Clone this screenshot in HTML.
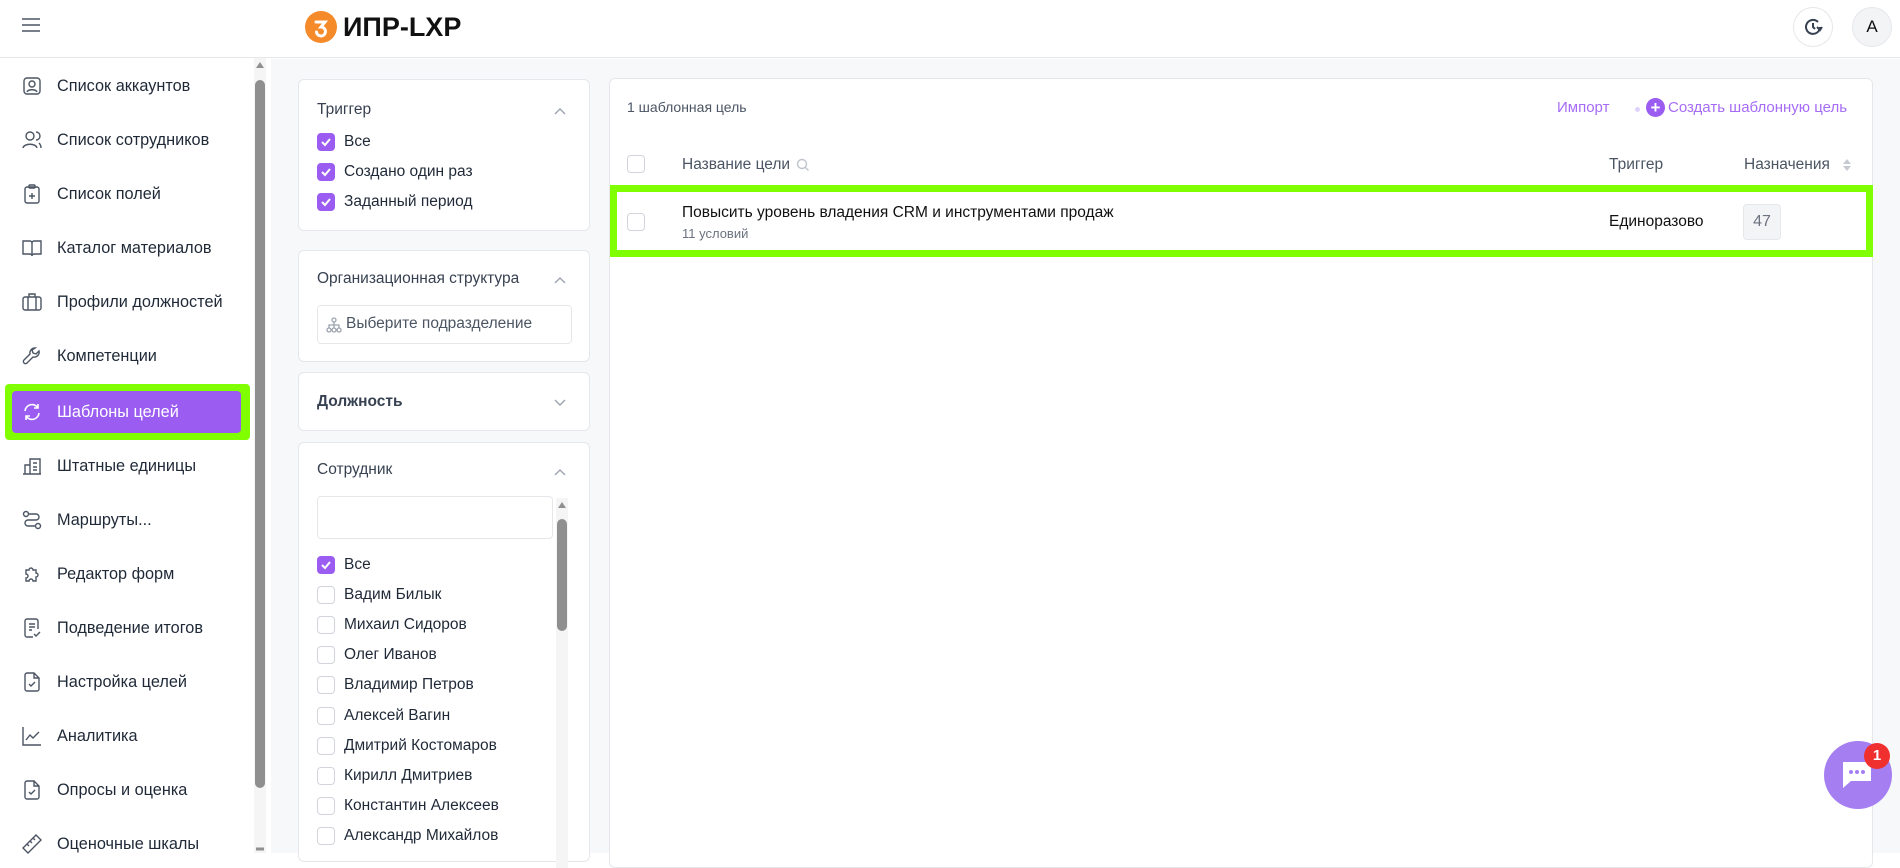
<!DOCTYPE html>
<html><head><meta charset="utf-8"><style>
*{box-sizing:border-box;margin:0;padding:0}
body{width:1900px;height:853px;overflow:hidden;background:#fff;font-family:"Liberation Sans",Arial,sans-serif;color:#1f2937;position:relative}
.abs{position:absolute}
.top{left:0;top:0;width:1900px;height:58px;border-bottom:1px solid #e5e7eb;background:#fff}
.item{position:absolute;left:0;height:40px;width:250px;display:flex;align-items:center;font-size:16.3px;color:#1f2937}
.item svg{position:absolute;left:22px;width:20px;height:20px}
.item span{position:absolute;left:57px}
.content{left:271px;top:59px;width:1629px;height:794px;background:#f7f8fa}
.card{position:absolute;background:#fff;border:1px solid #e5e7eb;border-radius:6px}
.ttl{position:absolute;left:18px;font-size:15.5px;color:#374151}
.chev{position:absolute;right:22px;width:14px;height:14px}
.cb{position:absolute;width:18px;height:18px;border-radius:4px;border:1px solid #d1d5db;background:#fff}
.cb.on{background:#9b5cf2;border-color:#9b5cf2}
.lbl{position:absolute;font-size:15.5px;color:#1f2937}
</style></head><body>
<div class="abs top"></div>
<svg class="abs" style="left:21px;top:17px" width="20" height="16" viewBox="0 0 20 16"><path d="M1 2h18M1 8h18M1 14h18" stroke="#4b5563" stroke-width="1.6"/></svg>
<svg class="abs" style="left:305px;top:11px" width="32" height="32" viewBox="0 0 32 32"><circle cx="16" cy="16" r="16" fill="#f58a2a"/><path d="M11 11h9l-4 5a4.5 4.5 0 1 1-4.5 5" stroke="#fff" stroke-width="3" fill="none" stroke-linecap="round"/></svg>
<div class="abs" style="left:343px;top:12px;font-size:27px;font-weight:bold;color:#111">ИПР-LXP</div>
<div class="abs" style="left:1793px;top:7px;width:40px;height:40px;border:1px solid #e5e7eb;border-radius:50%"></div>
<svg class="abs" style="left:1803px;top:17px" width="20" height="20" viewBox="0 0 20 20"><path d="M17 10a7 7 0 1 1-2-5" stroke="#374151" stroke-width="2" fill="none"/><path d="M10 6v4l2 2" stroke="#374151" stroke-width="2" fill="none"/><path d="M14 10l3 3 2-3" stroke="#374151" stroke-width="2" fill="none"/></svg>
<div class="abs" style="left:1852px;top:7px;width:40px;height:40px;border:1px solid #e5e7eb;border-radius:50%;background:#f3f4f6;text-align:center;line-height:38px;font-size:17px;color:#111">A</div>

<div class="abs" style="left:0;top:58px;width:254px;height:795px">
<div class="item" style="top:8px"><svg viewBox="0 0 20 20" fill="none" stroke="#4b5563" stroke-width="1.4"><rect x="2" y="2" width="16" height="16" rx="3"/><circle cx="10" cy="8" r="3"/><path d="M5 16c1-3 9-3 10 0"/></svg><span>Список аккаунтов</span></div>
<div class="item" style="top:62px"><svg viewBox="0 0 20 20" fill="none" stroke="#4b5563" stroke-width="1.4"><circle cx="8" cy="6" r="4"/><path d="M1 18c1-5 13-5 14 0M14 2a4 4 0 0 1 0 8M17 13c1 1 2 3 2 5"/></svg><span>Список сотрудников</span></div>
<div class="item" style="top:116px"><svg viewBox="0 0 20 20" fill="none" stroke="#4b5563" stroke-width="1.4"><rect x="3" y="3" width="14" height="16" rx="2"/><rect x="7" y="1" width="6" height="3" rx="1"/><path d="M10 9v6M7 12h6"/></svg><span>Список полей</span></div>
<div class="item" style="top:170px"><svg viewBox="0 0 20 20" fill="none" stroke="#4b5563" stroke-width="1.4"><path d="M1 3h7a2 2 0 0 1 2 2v13a2 2 0 0 0-2-2H1zM19 3h-7a2 2 0 0 0-2 2v13a2 2 0 0 1 2-2h7z"/></svg><span>Каталог материалов</span></div>
<div class="item" style="top:224px"><svg viewBox="0 0 20 20" fill="none" stroke="#4b5563" stroke-width="1.4"><rect x="1" y="5" width="18" height="13" rx="2"/><path d="M7 5V2h6v3M6 5v13M14 5v13"/></svg><span>Профили должностей</span></div>
<div class="item" style="top:278px"><svg viewBox="0 0 20 20" fill="none" stroke="#4b5563" stroke-width="1.4"><path d="M13 2a5 5 0 0 0-5 6L2 14a2 2 0 0 0 3 3l6-6a5 5 0 0 0 6-6l-3 3-3-1-1-3z"/></svg><span>Компетенции</span></div>
<div class="abs" style="left:5px;top:326px;width:245px;height:56px;background:#7fff00;border-radius:4px"></div>
<div class="abs" style="left:12px;top:333px;width:229px;height:42px;background:#9b5cf2;border-radius:4px"></div>
<div class="item" style="top:334px;color:#fff"><svg viewBox="0 0 20 20" fill="none" stroke="#fff" stroke-width="1.6"><path d="M3 9a7 7 0 0 1 13-3M17 11a7 7 0 0 1-13 3M16 2v4h-4M4 18v-4h4"/></svg><span>Шаблоны целей</span></div>
<div class="item" style="top:388px"><svg viewBox="0 0 20 20" fill="none" stroke="#4b5563" stroke-width="1.4"><path d="M1 18h18M3 18V9h5M8 18V3h10v15M11 7h4M11 11h4M11 14h4"/></svg><span>Штатные единицы</span></div>
<div class="item" style="top:442px"><svg viewBox="0 0 20 20" fill="none" stroke="#4b5563" stroke-width="1.4"><circle cx="4" cy="4" r="2.5"/><circle cx="16" cy="16" r="2.5"/><path d="M7 4h7a3 3 0 0 1 0 6H6a3 3 0 0 0 0 6h7"/></svg><span>Маршруты...</span></div>
<div class="item" style="top:496px"><svg viewBox="0 0 20 20" fill="none" stroke="#4b5563" stroke-width="1.4"><path d="M4 6h3a2 2 0 1 1 4 0h3v3a2 2 0 1 1 0 4v4h-3a2 2 0 1 0-4 0H4v-3a2 2 0 1 0 0-4z"/></svg><span>Редактор форм</span></div>
<div class="item" style="top:550px"><svg viewBox="0 0 20 20" fill="none" stroke="#4b5563" stroke-width="1.4"><path d="M16 11V3a2 2 0 0 0-2-2H5a2 2 0 0 0-2 2v14a2 2 0 0 0 2 2h6M7 6h6M7 9h6M7 12h3M12 16l2 2 4-4"/></svg><span>Подведение итогов</span></div>
<div class="item" style="top:604px"><svg viewBox="0 0 20 20" fill="none" stroke="#4b5563" stroke-width="1.4"><path d="M12 1H5a2 2 0 0 0-2 2v14a2 2 0 0 0 2 2h10a2 2 0 0 0 2-2V6zM12 1v5h5M7 12l2 2 4-4"/></svg><span>Настройка целей</span></div>
<div class="item" style="top:658px"><svg viewBox="0 0 20 20" fill="none" stroke="#4b5563" stroke-width="1.4"><path d="M1 1v18h18M4 14l4-5 3 3 6-6"/></svg><span>Аналитика</span></div>
<div class="item" style="top:712px"><svg viewBox="0 0 20 20" fill="none" stroke="#4b5563" stroke-width="1.4"><path d="M12 1H5a2 2 0 0 0-2 2v14a2 2 0 0 0 2 2h10a2 2 0 0 0 2-2V6zM12 1v5h5M7 12l2 2 4-4"/></svg><span>Опросы и оценка</span></div>
<div class="item" style="top:766px"><svg viewBox="0 0 20 20" fill="none" stroke="#4b5563" stroke-width="1.4"><path d="M14 1l5 5L6 19l-5-5zM11 4l2 2M8 7l2 2M5 10l2 2"/></svg><span>Оценочные шкалы</span></div>
</div>
<div class="abs" style="left:254px;top:58px;width:12px;height:795px;background:#f5f5f5"></div>
<svg class="abs" style="left:254px;top:60px" width="12" height="10"><path d="M2 8L6 2l4 6z" fill="#909090"/></svg>
<div class="abs" style="left:255px;top:80px;width:10px;height:708px;background:#8f8f8f;border-radius:5px"></div>
<svg class="abs" style="left:254px;top:843px" width="12" height="10"><path d="M2 6h8" stroke="#909090" stroke-width="3"/></svg>

<div class="abs content"></div>

<div class="card" style="left:298px;top:79px;width:292px;height:152px">
<div class="ttl" style="top:21px">Триггер</div>
<svg class="chev" style="top:24px" viewBox="0 0 14 14"><path d="M2 10l5-5 5 5" stroke="#9ca3af" stroke-width="1.4" fill="none"/></svg>
<div class="cb on" style="left:18px;top:53px"><svg width="16" height="16" viewBox="0 0 16 16"><path d="M4 8l3 3 5-6" stroke="#fff" stroke-width="2" fill="none"/></svg></div><div class="lbl" style="left:45px;top:53px">Все</div>
<div class="cb on" style="left:18px;top:83px"><svg width="16" height="16" viewBox="0 0 16 16"><path d="M4 8l3 3 5-6" stroke="#fff" stroke-width="2" fill="none"/></svg></div><div class="lbl" style="left:45px;top:83px">Создано один раз</div>
<div class="cb on" style="left:18px;top:113px"><svg width="16" height="16" viewBox="0 0 16 16"><path d="M4 8l3 3 5-6" stroke="#fff" stroke-width="2" fill="none"/></svg></div><div class="lbl" style="left:45px;top:113px">Заданный период</div>
</div>

<div class="card" style="left:298px;top:250px;width:292px;height:112px">
<div class="ttl" style="top:19px">Организационная структура</div>
<svg class="chev" style="top:22px" viewBox="0 0 14 14"><path d="M2 10l5-5 5 5" stroke="#9ca3af" stroke-width="1.4" fill="none"/></svg>
<div class="abs" style="left:18px;top:54px;width:255px;height:39px;border:1px solid #e5e7eb;border-radius:4px"></div>
<svg class="abs" style="left:27px;top:66px" width="16" height="16" viewBox="0 0 16 16" fill="none" stroke="#9ca3af" stroke-width="1.3"><circle cx="8" cy="3" r="2"/><circle cx="3" cy="13" r="2"/><circle cx="8" cy="13" r="2"/><circle cx="13" cy="13" r="2"/><path d="M8 5v6M3 11V8h10v3"/></svg>
<div class="lbl" style="left:47px;top:64px;color:#4b5563">Выберите подразделение</div>
</div>

<div class="card" style="left:298px;top:372px;width:292px;height:59px">
<div class="ttl" style="top:20px;font-weight:bold">Должность</div>
<svg class="chev" style="top:23px" viewBox="0 0 14 14"><path d="M2 4l5 5 5-5" stroke="#9ca3af" stroke-width="1.4" fill="none"/></svg>
</div>

<div class="card" style="left:298px;top:442px;width:292px;height:420px">
<div class="ttl" style="top:18px">Сотрудник</div>
<svg class="chev" style="top:22px" viewBox="0 0 14 14"><path d="M2 10l5-5 5 5" stroke="#9ca3af" stroke-width="1.4" fill="none"/></svg>
<div class="abs" style="left:18px;top:53px;width:236px;height:43px;border:1px solid #e5e7eb;border-radius:4px"></div>
<div class="abs" style="left:257px;top:55px;width:12px;height:370px;background:#f5f5f5"></div>
<svg class="abs" style="left:257px;top:57px" width="12" height="10"><path d="M2 8L6 2l4 6z" fill="#909090"/></svg>
<div class="abs" style="left:258px;top:76px;width:10px;height:112px;background:#8f8f8f;border-radius:5px"></div>
<div class="cb on" style="left:18px;top:113px"><svg width="16" height="16" viewBox="0 0 16 16"><path d="M4 8l3 3 5-6" stroke="#fff" stroke-width="2" fill="none"/></svg></div><div class="lbl" style="left:45px;top:113px">Все</div>
<div class="cb" style="left:18px;top:143px"></div><div class="lbl" style="left:45px;top:143px">Вадим Билык</div>
<div class="cb" style="left:18px;top:173px"></div><div class="lbl" style="left:45px;top:173px">Михаил Сидоров</div>
<div class="cb" style="left:18px;top:203px"></div><div class="lbl" style="left:45px;top:203px">Олег Иванов</div>
<div class="cb" style="left:18px;top:233px"></div><div class="lbl" style="left:45px;top:233px">Владимир Петров</div>
<div class="cb" style="left:18px;top:264px"></div><div class="lbl" style="left:45px;top:264px">Алексей Вагин</div>
<div class="cb" style="left:18px;top:294px"></div><div class="lbl" style="left:45px;top:294px">Дмитрий Костомаров</div>
<div class="cb" style="left:18px;top:324px"></div><div class="lbl" style="left:45px;top:324px">Кирилл Дмитриев</div>
<div class="cb" style="left:18px;top:354px"></div><div class="lbl" style="left:45px;top:354px">Константин Алексеев</div>
<div class="cb" style="left:18px;top:384px"></div><div class="lbl" style="left:45px;top:384px">Александр Михайлов</div>
</div>

<div class="card" style="left:609px;top:78px;width:1264px;height:790px">
<div class="abs" style="left:17px;top:20px;font-size:14px;color:#4b5563">1 шаблонная цель</div>
<div class="abs" style="left:947px;top:20px;font-size:15px;color:#a66cf5">Импорт</div>
<div class="abs" style="left:1025px;top:28px;width:5px;height:5px;border-radius:50%;background:#e0d4fb"></div>
<div class="abs" style="left:1036px;top:19px;width:19px;height:19px;border-radius:50%;background:#9b5cf2;color:#fff;text-align:center;line-height:19px;font-size:17px;font-weight:bold">+</div>
<div class="abs" style="left:1058px;top:20px;font-size:15px;color:#a66cf5">Создать шаблонную цель</div>
<div class="cb" style="left:17px;top:76px"></div>
<div class="abs" style="left:72px;top:77px;font-size:15.5px;color:#4b5563">Название цели</div>
<svg class="abs" style="left:186px;top:79px" width="14" height="14" viewBox="0 0 14 14"><circle cx="6" cy="6" r="4.5" stroke="#c0c4cc" stroke-width="1.4" fill="none"/><path d="M9.5 9.5l3 3" stroke="#c0c4cc" stroke-width="1.4"/></svg>
<div class="abs" style="left:999px;top:77px;font-size:15.5px;color:#4b5563">Триггер</div>
<div class="abs" style="left:1134px;top:77px;font-size:15.5px;color:#4b5563">Назначения</div>
<svg class="abs" style="left:1232px;top:79px" width="10" height="14"><path d="M1 6l4-5 4 5zM1 8l4 5 4-5z" fill="#c6cad1"/></svg>
<div class="abs" style="left:0;top:106px;width:1263px;height:72px;border:7px solid #7fff00"></div>
<div class="cb" style="left:17px;top:134px"></div>
<div class="abs" style="left:72px;top:125px;font-size:15.5px;color:#111">Повысить уровень владения CRM и инструментами продаж</div>
<div class="abs" style="left:72px;top:147px;font-size:13px;color:#6b7280">11 условий</div>
<div class="abs" style="left:999px;top:134px;font-size:15.5px;color:#111">Единоразово</div>
<div class="abs" style="left:1133px;top:125px;width:38px;height:36px;border:1px solid #e5e7eb;border-radius:4px;background:#f3f4f6;text-align:center;line-height:34px;font-size:16px;color:#6b7280">47</div>
</div>

<div class="abs" style="left:1824px;top:741px;width:68px;height:68px;border-radius:50%;background:#a57ff2"></div>
<svg class="abs" style="left:1840px;top:760px" width="34" height="32" viewBox="0 0 34 32"><path d="M3 2h28v19H11l-8 7z" fill="#fff"/><circle cx="11" cy="12" r="2" fill="#a57ff2"/><circle cx="17" cy="12" r="2" fill="#a57ff2"/><circle cx="23" cy="12" r="2" fill="#a57ff2"/></svg>
<div class="abs" style="left:1864px;top:743px;width:26px;height:26px;border-radius:50%;background:#f0302f;color:#fff;text-align:center;line-height:26px;font-size:15px;font-weight:bold">1</div>
</body></html>
